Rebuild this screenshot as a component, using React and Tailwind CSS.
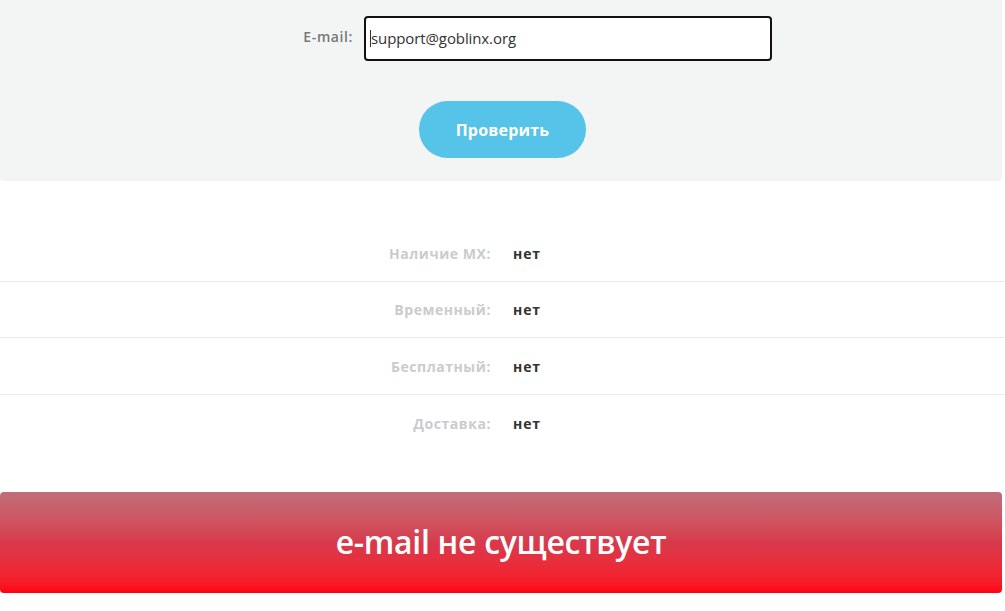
import React from "react";

const rows = [
  { label: "Наличие MX:", value: "нет" },
  { label: "Временный:", value: "нет" },
  { label: "Бесплатный:", value: "нет" },
  { label: "Доставка:", value: "нет" },
];

const App = () => {
  return (
    <div
      className="w-[1005px] h-[611px] bg-white overflow-hidden"
      style={{ fontFamily: "'Open Sans', 'Liberation Sans', sans-serif" }}
    >
      {/* Check form */}
      <div className="w-[1002px] h-[181px] bg-[#f3f5f5] rounded-b-[4px] pt-[16px]">
        <div className="flex items-center h-[45px]">
          <label className="w-[354px] pr-[1px] text-right text-[14px] font-semibold text-[#777] leading-none tracking-[0.6px] -mt-[3px]">
            E-mail:
          </label>
          <div className="ml-[10px] w-[408px] h-[45px] bg-white border-2 border-[#111] rounded-[4px] flex items-center pl-[4px]">
            <span className="w-px h-[17px] bg-[#333]"></span>
            <span className="text-[15px] text-[#333] tracking-[-0.1px]">support@goblinx.org</span>
          </div>
        </div>
        <div className="flex justify-center mt-[40px]">
          <button className="ml-[3px] w-[167px] h-[57px] rounded-full bg-[#56c3e9] text-white text-[16px] font-bold tracking-[0.2px]">
            Проверить
          </button>
        </div>
      </div>

      {/* Result table */}
      <div className="pt-[44px] pb-[40px]">
        {rows.map((row, i) => (
          <div
            key={i}
            className={`flex items-center ${i === 1 ? "h-[56px]" : "h-[57px]"} ${i < rows.length - 1 ? "border-b border-[#ebebeb]" : ""}`}
          >
            <div className="w-[491px] text-right text-[14px] font-bold text-[#c9cccd] tracking-[0.55px]">
              {row.label}
            </div>
            <div className="ml-[22px] text-[14px] font-bold text-[#333] tracking-[0.9px]">{row.value}</div>
          </div>
        ))}
      </div>

      {/* Status banner */}
      <div className="w-[1002px] h-[101px] rounded-[4px] bg-gradient-to-b from-[#bf6e7a] via-[#d8394c] to-[#ff0012] flex items-center justify-center">
        <span className="text-white text-[32px] font-semibold tracking-[-0.3px] -mt-[2px]">
          e-mail не существует
        </span>
      </div>
    </div>
  );
};

export default App;
